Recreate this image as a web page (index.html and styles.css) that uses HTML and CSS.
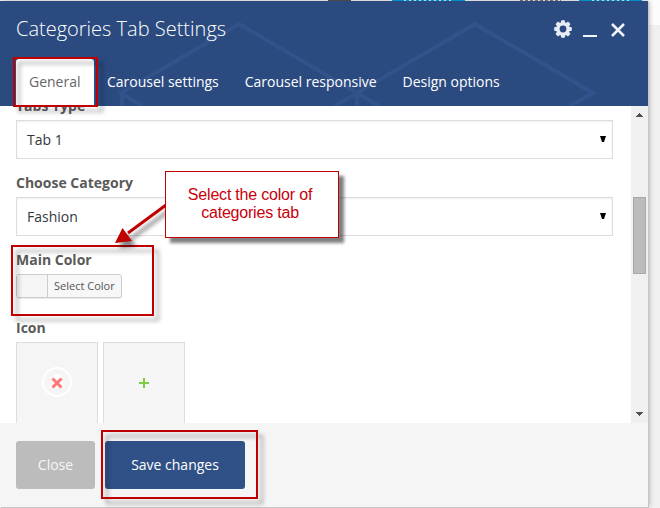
FILE: index.html
```html
<!DOCTYPE html>
<html lang="en">
<head>
<meta charset="utf-8">
<title>Categories Tab Settings</title>
<link rel="stylesheet" href="styles.css">
</head>
<body>
<svg class="backdrop" width="660" height="508" aria-hidden="true">
  <path fill="#fcfcfc" d="M0 0h660v25H0z"/>
  <path fill="#555" d="M328 0h23v1h-23z"/>
  <path stroke="#877" stroke-dasharray="3 2" d="M520 .5h41"/>
  <path fill="#00a7e8" d="M392 0h73v1h-73zM579 0h63v1h-63z"/>
  <path stroke="#d8f2fc" stroke-dasharray="2 3" d="M404 .5h49M592 .5h38"/>
</svg>
<main class="modal">
  <header class="head">
    <svg class="pattern" width="648" height="105" aria-hidden="true">
      <path d="M142 105L121 92 239 23 357 92 475 23 593 92 570 105M122 92v13M335 105l22-13 22 13M357 92v13"/>
    </svg>
    <div class="titlebar">
      <h1>Categories Tab Settings</h1>
      <div class="controls">
        <svg class="gear" width="18" height="18" viewBox="-9 -9 18 18">
          <g fill="#e8edf5"><path id="tooth" d="M-2.3-6L-1.7-8.8H1.7L2.3-6V6L1.7 8.8H-1.7L-2.3 6z"/><use href="#tooth" transform="rotate(45)"/><use href="#tooth" transform="rotate(90)"/><use href="#tooth" transform="rotate(135)"/><circle r="6.7"/></g>
          <circle r="3.4" fill="#2b4b80"/>
        </svg>
        <span class="minimize"></span>
        <svg class="dismiss" width="14" height="14"><path d="M1 1l12 12M13 1L1 13" stroke="#f1f4f9" stroke-width="2.5"/></svg>
      </div>
    </div>
    <nav class="tabs"><span class="tab active">General</span><span class="tab">Carousel settings</span><span class="tab">Carousel responsive</span><span class="tab">Design options</span></nav>
  </header>
  <section class="body">
    <div class="form">
      <label class="first">Tabs Type</label>
      <div class="select"><span>Tab 1</span><svg width="6" height="6"><path d="M0 0h6L4 6H2z"/></svg></div>
      <label class="category">Choose Category</label>
      <div class="select"><span>Fashion</span><svg width="6" height="6"><path d="M0 0h6L4 6H2z"/></svg></div>
      <label class="color">Main Color</label>
      <div class="picker"><span class="swatch"></span><span class="pick">Select Color</span></div>
      <label class="icon">Icon</label>
      <div class="tiles">
        <div class="tile"><svg width="30" height="30"><circle cx="15" cy="15" r="14" fill="none" stroke="#fff" stroke-width="2"/><path d="M13 7h5l5 14H8z" fill="#fff"/><path d="M10.500 11.500l9 9M19.500 11.500l-9 9" stroke="#ff7776" stroke-width="3"/></svg></div>
        <div class="tile"><svg width="30" height="30"><path d="M10 16h10M15 11v10" stroke="#7fcc43" stroke-width="2"/></svg></div>
      </div>
    </div>
    <div class="scrollbar">
      <svg width="7" height="4"><path d="M3 0h1v1h1v1h1v1h1v1H0V3h1V2h1V1h1z" fill="#505050"/></svg>
      <span class="thumb"></span>
      <svg width="7" height="4"><path d="M0 0h7v1H6v1H5v1H4v1H3V3H2V2H1V1H0z" fill="#505050"/></svg>
    </div>
  </section>
  <footer class="foot"><span class="button close">Close</span><span class="button save">Save changes</span></footer>
</main>
<div class="mark mark-general"></div>
<div class="mark mark-color"></div>
<div class="mark mark-save"></div>
<svg class="arrow" width="60" height="50"><path d="M56 6L18 34" stroke="#c00000" stroke-width="3"/><path d="M5 44l7.500-15L22 42z" fill="#c00000"/></svg>
<div class="callout">Select the color of<br>categories tab</div>
</body>
</html>
```

FILE: styles.css
```css
* { box-sizing: border-box; }
body { margin: 0; width: 660px; height: 508px; padding-top: 1px; overflow: hidden; position: relative; background: #f0f0f0; font: 14px/20px "Open Sans", sans-serif; color: #5a5a5a; }
svg { display: block; flex: none; }
.backdrop { position: absolute; top: 0; left: 0; }
.modal { position: relative; width: 648px; height: 506px; display: flex; flex-direction: column; box-shadow: 1px 1px 0 #c6c6c6, 1px 0 5px rgba(0,0,0,.3); }
.head { position: relative; height: 105px; background: #2b4b80; color: #fff; display: flex; flex-direction: column; justify-content: space-between; flex: none; }
.pattern { position: absolute; top: 0; left: 0; fill: none; stroke: #31528a; stroke-width: 4; }
.titlebar { position: relative; display: flex; justify-content: space-between; padding: 13px 23px 0 16px; }
h1 { margin: 0; font-size: 20px; line-height: 29px; font-weight: 300; }
.controls { display: flex; padding-top: 6px; }
.minimize { width: 14px; height: 2px; background: #f1f4f9; margin: 15px 14px 0 11px; }
.dismiss { margin-top: 3px; }
.tabs { position: relative; display: flex; padding-left: 16px; }
.tab { height: 47px; padding: 13px 13px 0; white-space: nowrap; letter-spacing: -.01px; }
.active { width: 78px; background: #fff; color: #666; border-radius: 3px 3px 0 0; }
.body { height: 317px; display: flex; background: #fff; overflow: hidden; flex: none; }
.form { width: 631px; padding: 0 18px 0 16px; display: flex; flex-direction: column; }
label { display: block; height: 20px; font-weight: 700; flex: none; }
.first { margin: -10px 0 4px; }
.category { margin: 14px 0 4px; }
.color { margin: 14px 0 4px; }
.icon { margin: 20px 0 4px; }
.select { height: 39px; flex: none; border: 1px solid #ddd; box-shadow: inset 0 1px 2px rgba(0,0,0,.07); padding: 0 6px 0 10px; display: flex; align-items: center; justify-content: space-between; color: #32373c; }
.select svg { margin-bottom: 2px; }
.picker { width: 106px; height: 24px; flex: none; display: flex; border: 1px solid #ccc; border-radius: 3px; background: #f7f7f7; font-size: 11px; line-height: 22px; color: #555; box-shadow: 0 1px 0 rgba(0,0,0,.08); }
.swatch { width: 31px; border-right: 1px solid #ccc; background: #f5f5f5; }
.pick { padding-left: 6px; white-space: nowrap; }
.tiles { display: flex; gap: 5px; flex: none; }
.tile { width: 82px; height: 82px; border: 1px solid #ddd; background: #f5f5f5; display: flex; justify-content: center; padding-top: 24px; }
.scrollbar { width: 17px; background: #f0f0f0; display: flex; flex-direction: column; align-items: center; padding: 7px 0; }
.thumb { width: 13px; height: 77px; margin: 80px 0 138px; background: #bbb; border: 1px solid #a8a8a8; flex: none; }
.foot { height: 84px; background: #f5f5f5; display: flex; gap: 10px; padding: 18px 16px; flex: none; }
.button { height: 48px; line-height: 48px; border-radius: 3px; text-align: center; color: #fff; }
.close { width: 79px; background: #bcbcbc; color: #f5f5f5; }
.save { width: 140px; background: #305187; }
.mark { position: absolute; border: 2px solid #c00000; filter: drop-shadow(5px 5px 2px rgba(0,0,0,.35)); }
.mark-general { left: 13px; top: 57px; width: 85px; height: 50px; }
.mark-color { left: 11px; top: 245px; width: 143px; height: 71px; }
.mark-save { left: 101px; top: 430px; width: 157px; height: 69px; }
.arrow { position: absolute; left: 110px; top: 199px; filter: drop-shadow(4px 5px 2px rgba(0,0,0,.5)); }
.callout { position: absolute; left: 165px; top: 171px; width: 174px; height: 67px; padding-top: 14px; padding-right: 4px; border: 1px solid #c00000; background: #fff; box-shadow: 5px 5px 3px rgba(0,0,0,.5); color: #c8000c; font: 16px/18px "Liberation Sans", sans-serif; letter-spacing: -.2px; text-align: center; }
```
